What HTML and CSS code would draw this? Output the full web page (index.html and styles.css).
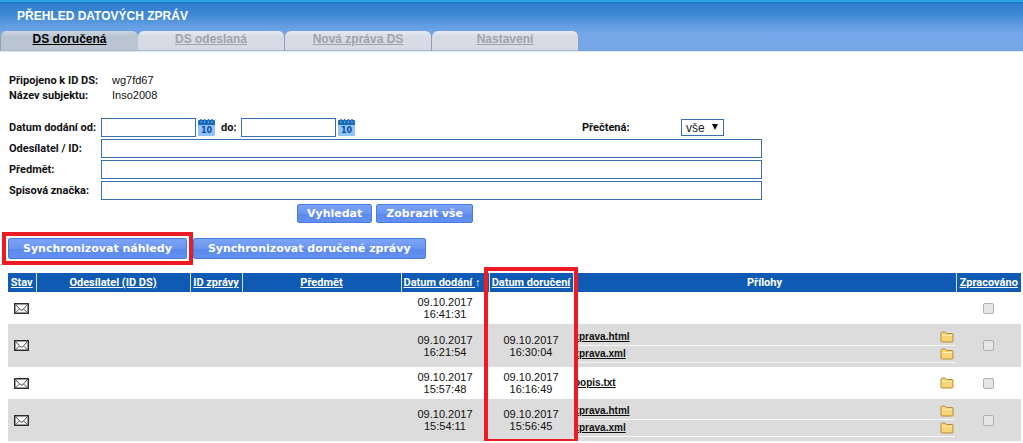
FILE: index.html
```html
<!DOCTYPE html>
<html lang="cs">
<head>
<meta charset="utf-8">
<title>Přehled datových zpráv</title>
<link rel="stylesheet" href="styles.css">
</head>
<body>
<svg class="sprites" aria-hidden="true">
  <symbol id="mail" viewBox="0 0 15 11"><rect x=".75" y=".75" width="13.5" height="9.5" fill="#fff" stroke="#222" stroke-width="1.4"/><path d="M2 2l4.500 5h2L13 2M2 9.300l3-3M13 9.300l-3-3" fill="none" stroke="#333" stroke-width=".9"/></symbol>
  <symbol id="folder" viewBox="0 0 14 12"><path d="M1 10V2.500Q1 1 2.500 1H5l1.500 1.500H12q1 0 1 1V10q0 1-1 1H2Q1 11 1 10z" fill="#f8d477" stroke="#b98a38"/><path d="M2 4.500h10" stroke="#fff0b8"/></symbol>
</svg>
<header class="top">
  <h1>PŘEHLED DATOVÝCH ZPRÁV</h1>
  <nav class="tabs">
    <a class="tab active" href="#">DS doručená</a>
    <a class="tab" href="#">DS odeslaná</a>
    <a class="tab" href="#">Nová zpráva DS</a>
    <a class="tab" href="#">Nastavení</a>
  </nav>
</header>
<main>
  <dl class="info">
    <dt>Připojeno k ID DS:</dt><dd>wg7fd67</dd>
    <dt>Název subjektu:</dt><dd>Inso2008</dd>
  </dl>
  <form class="filter">
    <label for="od">Datum dodání od:</label>
    <div class="dates">
      <input class="date" id="od" type="text">
      <button class="pick" type="button" aria-label="Kalendář od"><svg viewBox="0 0 17 17"><rect y="2" width="17" height="15" rx="1" fill="#8fc5fb"/><path d="M0 2q0-1 1-1h15q1 0 1 1v4H0z" fill="#1c6bb8"/><path d="M3 0v4M6.500 0v4M10.500 0v4M14 0v4" stroke="#1c6bb8" stroke-width="1.500"/><path d="M3 2v2M6.500 2v2M10.500 2v2M14 2v2" stroke="#5ba4e6"/><text x="8.500" y="14" text-anchor="middle" class="cal-day">10</text></svg></button>
      <label class="to" for="do">do:</label>
      <input class="date" id="do" type="text">
      <button class="pick" type="button" aria-label="Kalendář do"><svg viewBox="0 0 17 17"><rect y="2" width="17" height="15" rx="1" fill="#8fc5fb"/><path d="M0 2q0-1 1-1h15q1 0 1 1v4H0z" fill="#1c6bb8"/><path d="M3 0v4M6.500 0v4M10.500 0v4M14 0v4" stroke="#1c6bb8" stroke-width="1.500"/><path d="M3 2v2M6.500 2v2M10.500 2v2M14 2v2" stroke="#5ba4e6"/><text x="8.500" y="14" text-anchor="middle" class="cal-day">10</text></svg></button>
      <label class="read" for="pr">Přečtená:</label>
      <span class="pickbox"><select id="pr"><option>vše</option></select></span>
    </div>
    <label for="ods">Odesílatel / ID:</label><input id="ods" type="text">
    <label for="pre">Předmět:</label><input id="pre" type="text">
    <label for="spi">Spisová značka:</label><input id="spi" type="text">
    <div class="actions"><button class="btn" type="button">Vyhledat</button><button class="btn" type="button">Zobrazit vše</button></div>
  </form>
  <div class="sync">
    <span class="marked"><button class="btn big" type="button">Synchronizovat náhledy</button></span>
    <button class="btn big" type="button">Synchronizovat doručené zprávy</button>
  </div>
  <div class="list">
    <table>
      <colgroup><col class="c-state"><col class="c-from"><col class="c-id"><col class="c-subj"><col class="c-date"><col class="c-recv"><col><col class="c-done"></colgroup>
      <thead><tr>
        <th><a href="#">Stav</a></th><th><a href="#">Odesílatel (ID DS)</a></th><th><a href="#">ID zprávy</a></th><th><a href="#">Předmět</a></th><th class="sorted"><a href="#">Datum dodání&nbsp;</a>↑</th><th><a href="#">Datum doručení</a></th><th>Přílohy</th><th><a href="#">Zpracováno</a></th>
      </tr></thead>
      <tbody>
        <tr><td><svg class="mail"><use href="#mail"/></svg></td><td></td><td></td><td></td><td>09.10.2017<br>16:41:31</td><td></td><td></td><td><input type="checkbox" aria-label="Zpracováno"></td></tr>
        <tr class="two"><td><svg class="mail"><use href="#mail"/></svg></td><td></td><td></td><td></td><td>09.10.2017<br>16:21:54</td><td>09.10.2017<br>16:30:04</td>
          <td class="files"><div class="file"><a href="#">zprava.html</a><svg><use href="#folder"/></svg></div><div class="file"><a href="#">zprava.xml</a><svg><use href="#folder"/></svg></div></td><td><input type="checkbox" aria-label="Zpracováno"></td></tr>
        <tr><td><svg class="mail"><use href="#mail"/></svg></td><td></td><td></td><td></td><td>09.10.2017<br>15:57:48</td><td>09.10.2017<br>16:16:49</td>
          <td class="files"><div class="file"><a href="#">popis.txt</a><svg><use href="#folder"/></svg></div></td><td><input type="checkbox" aria-label="Zpracováno"></td></tr>
        <tr class="two"><td><svg class="mail"><use href="#mail"/></svg></td><td></td><td></td><td></td><td>09.10.2017<br>15:54:11</td><td>09.10.2017<br>15:56:45</td>
          <td class="files"><div class="file"><a href="#">zprava.html</a><svg><use href="#folder"/></svg></div><div class="file"><a href="#">zprava.xml</a><svg><use href="#folder"/></svg></div></td><td><input type="checkbox" aria-label="Zpracováno"></td></tr>
      </tbody>
    </table>
    <div class="column-mark"></div>
  </div>
</main>
</body>
</html>
```
FILE: styles.css
```css
* { box-sizing: border-box; }
body { margin: 0; background: #fff; color: #111; font: 11px/15px "Liberation Sans", Arial, sans-serif; }
.sprites { position: absolute; width: 0; height: 0; }
.cal-day { font: bold 8px "DejaVu Sans", sans-serif; fill: #0c4f9e; }

.top { border-top: 2px solid #2da3e6; border-bottom: 1px solid #d8ecfb; display: flex; flex-direction: column; gap: 7px; background: linear-gradient(#1f7bc8, #337fcd 6%, #3c86d2 24%, #5e9be1 45%, #75a7e8 65%, #76a6e8 98%, #7599d0); }
h1 { margin: 0; padding: 7px 17px 0; font-size: 12px; line-height: 15px; color: #fff; }
.tabs { display: flex; }
.tab { width: 147px; height: 20px; text-align: center; font-weight: bold; font-size: 12px; line-height: 16px; color: #a0a3aa; background: linear-gradient(#e6eaf3, #d7dbe5 30%, #d7dbe5); border-right: 1px solid #8d9fbf; border-bottom: 1px solid #aeb5c6; border-radius: 6px 6px 0 0; }
.tab.active { width: 138px; color: #000; background: linear-gradient(#cdd6e3, #b9c4d1 30%, #bcc5d1); border-left: 1px solid #8d9fbf; border-right: 0; }

.info { margin: 21px 0 15px; padding-left: 9px; display: grid; grid-template-columns: 103px 1fr; }
.info dt, label { font-family: Roboto, "Liberation Sans", sans-serif; font-weight: bold; white-space: nowrap; }
.info dd { margin: 0; }

.filter { display: grid; grid-template-columns: 92px minmax(0, 661px); row-gap: 2px; padding-left: 9px; align-items: center; }
.filter input { height: 19px; width: 100%; border: 1px solid #3a6fb8; background: #fff; padding: 1px 3px; font: inherit; }
.dates { display: flex; align-items: center; }
.filter .date { width: 95px; }
.pick { border: 0; background: none; padding: 0; margin: 0 2px; width: 17px; height: 17px; }
.pick svg { display: block; width: 17px; height: 17px; }
.to { width: 20px; margin-left: 4px; }
.read { margin-left: 225px; width: 99px; }
.pickbox { position: relative; display: flex; }
.pickbox::after { content: ""; position: absolute; right: 6px; top: 5px; border: 3px solid transparent; border-top: 6px solid #111; border-bottom: 0; pointer-events: none; }
select { appearance: none; width: 43px; height: 17px; border: 1px solid #3a6fb8; border-radius: 0; background: #fff; padding: 0 4px; font: 12px/14px "Liberation Sans", Arial, sans-serif; color: #222; }
.actions { grid-column: 2; display: flex; gap: 4px; padding: 2px 0 0 196px; }

.btn { height: 19px; padding: 0 9px; border: 1px solid #477ce0; border-radius: 2px; background: linear-gradient(#7ba3f6, #6b95f1 50%, #5a88ec 51%, #6491f0); color: #fff; font: bold 11px/15px "DejaVu Sans", Verdana, sans-serif; white-space: nowrap; }
.btn.big { height: 21px; padding: 0 14px; }
.sync { display: flex; padding: 9px 0 0 2px; align-items: center; }
.marked { display: flex; border: 4px solid #ed1c24; padding: 2px; }

.list { position: relative; margin: 8px 2px 0 8px; }
table { width: 100%; border-collapse: collapse; table-layout: fixed; }
.c-state { width: 28px; } .c-from { width: 154px; } .c-id { width: 52px; } .c-subj { width: 159px; } .c-date { width: 88px; } .c-recv { width: 84px; } .c-done { width: 65px; }
th { height: 19px; padding: 0; background: #0f5bb3; color: #fff; border-left: 1px solid #d5e2f2; white-space: nowrap; font-family: Roboto, "Liberation Sans", sans-serif; line-height: 15px; }
th:first-child { border-left: 0; }
th a { color: inherit; }
.sorted { text-align: left; padding-left: 2px; overflow: hidden; }
td { height: 32px; padding: 0; text-align: center; line-height: 12px; }
.two td { height: 43px; background: #dcdcdc; }
.two:last-child td { height: 42px; }
.mail { display: block; width: 15px; height: 11px; margin: 0 auto 0 6px; }
.file { display: flex; justify-content: space-between; align-items: center; height: 16px; padding: 0 1px; margin-right: 1px; }
.two .file { border-bottom: 1px solid #f6f6f6; height: 17px; }
.file a { color: #111; font-weight: bold; font-size: 10px; }
.file svg { width: 14px; height: 12px; }
td input { appearance: none; display: block; width: 11px; height: 11px; margin: 0 auto; border: 1px solid #b0b0b0; border-radius: 2px; background: #e6e6e6; }
.column-mark { position: absolute; left: 476px; top: -6px; bottom: -2px; width: 94px; border: 4px solid #ed1c24; pointer-events: none; }
```
